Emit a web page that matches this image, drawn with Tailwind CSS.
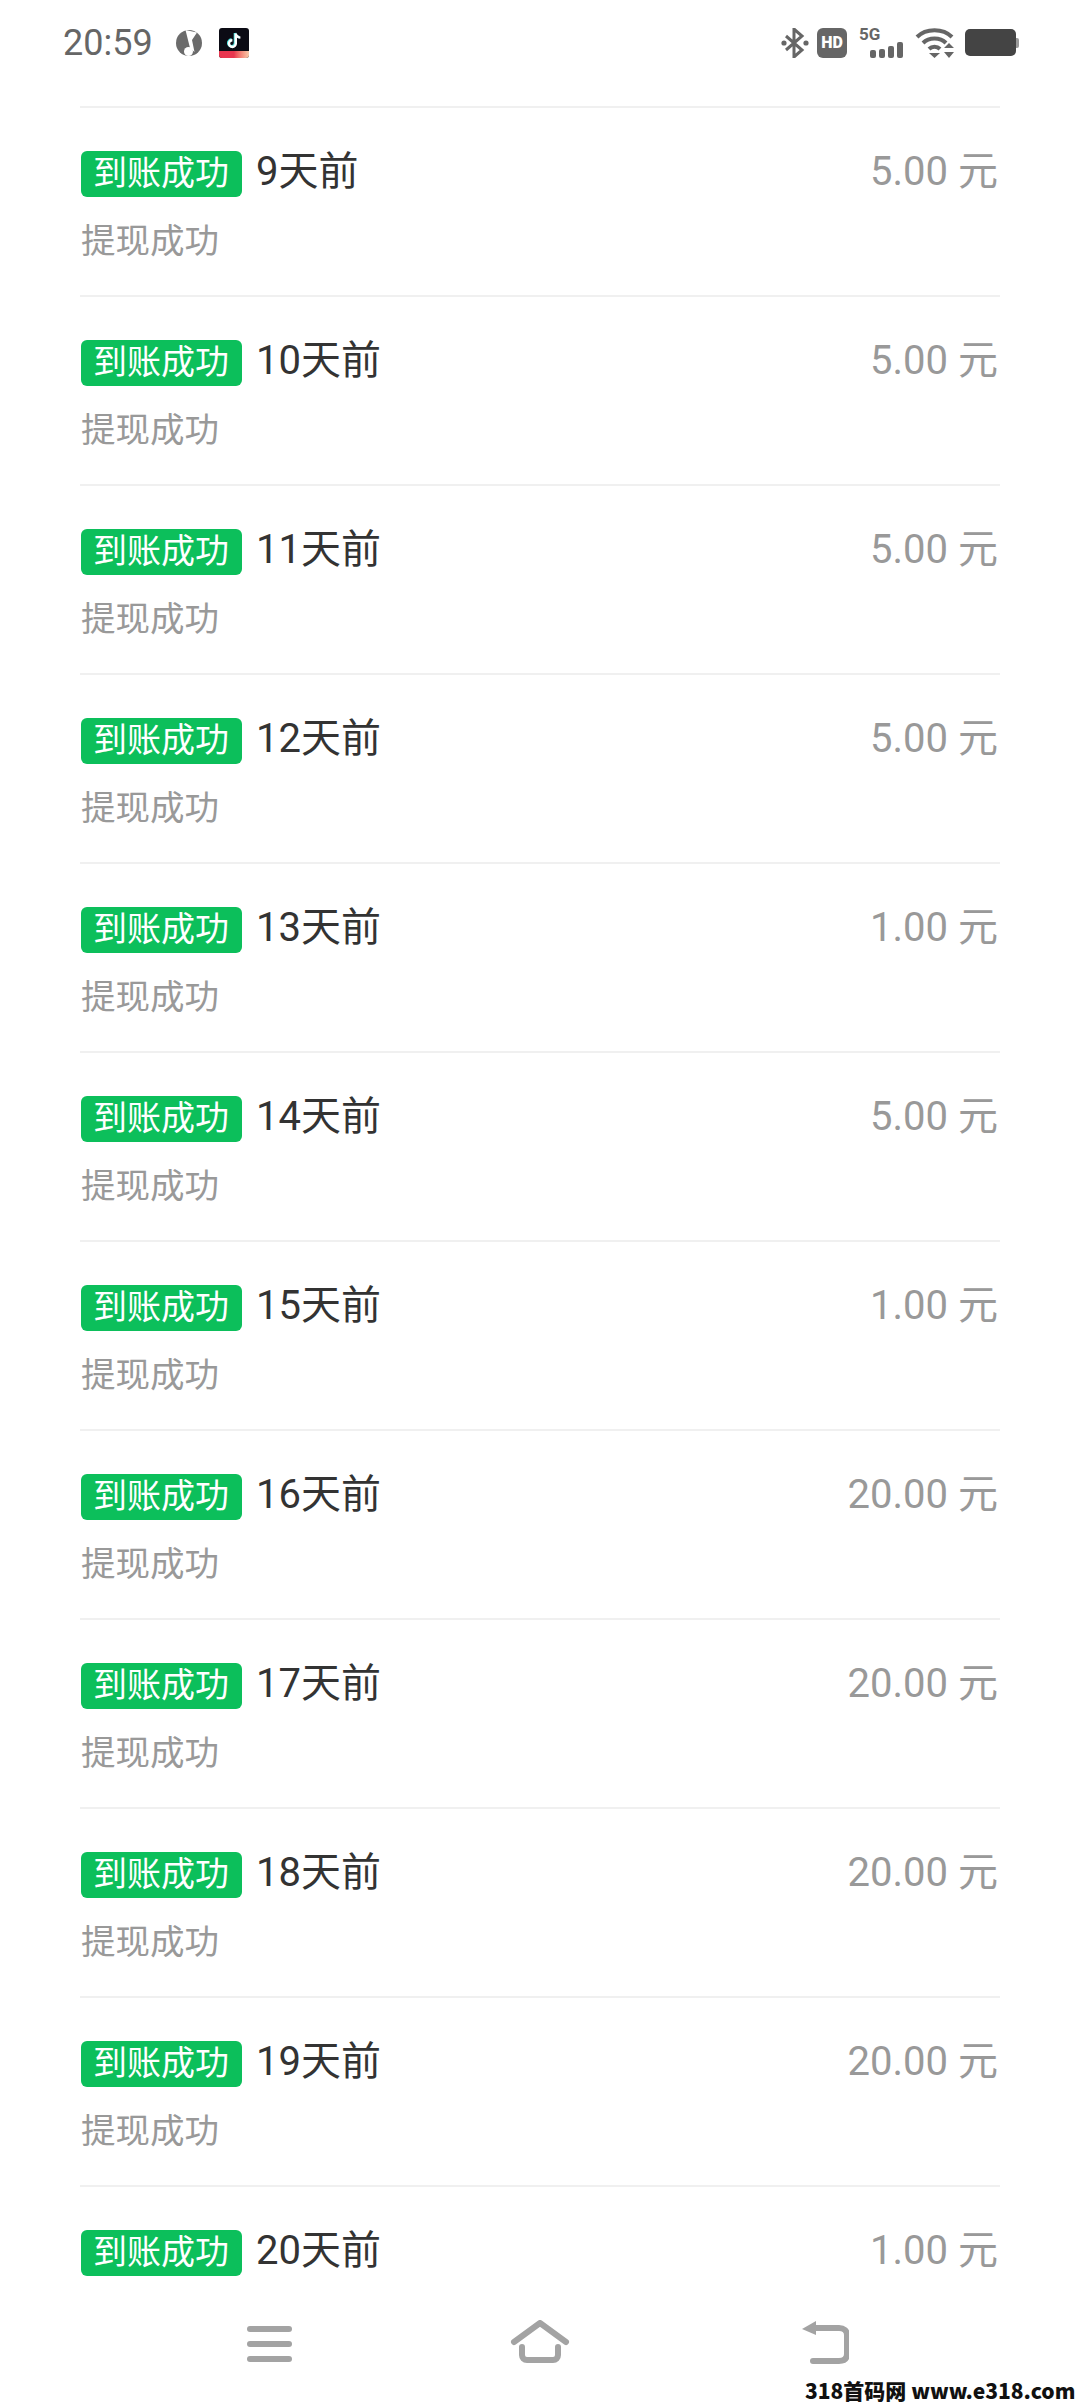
<!DOCTYPE html>
<html lang="zh-CN">
<head>
  <meta charset="UTF-8">
  <title>提现记录</title>
  <script src="https://cdn.jsdelivr.net/npm/@tailwindcss/browser@4"></script>
</head>
<body class="bg-white">
<div id="page" class="relative flex flex-col w-[1080px] h-[2408px] overflow-hidden bg-white font-['Roboto','Noto_Sans_CJK_SC',sans-serif]">
  <!-- Status bar -->
  <div class="flex items-center h-[84px] shrink-0 pl-[63px] pr-[61px] pt-[1px] text-[#666]">
    <span class="text-[36px] leading-none">20:59</span>
    <svg class="ml-[22px] w-[28px] h-[28px]" viewBox="0 0 28 28">
      <circle cx="14" cy="14" r="13" fill="#6b6b6b"/>
      <path d="M10.500 1L22 3.500 17 11 19.500 23 15 19z" fill="#fff"/>
      <circle cx="13.500" cy="22.500" r="4.500" fill="#fff"/>
    </svg>
    <div class="relative ml-[16px] w-[30px] h-[30px] rounded-[3px] bg-[#0b0b14] overflow-hidden">
      <svg class="absolute left-[6px] top-[3px] w-[18px] h-[18px]" viewBox="0 0 18 18" fill="none">
        <path d="M10 2v10a3.4 3.4 0 1 1-3.4-3.4M10 2c.4 2.6 2.2 4 4.6 4.2" stroke="#4fe3e0" stroke-width="2.6"/>
        <path d="M10.8 2.6v10a3.4 3.4 0 1 1-3.4-3.4M10.8 2.6c.4 2.4 2.2 3.8 4.6 4" stroke="#fff" stroke-width="2.4"/>
      </svg>
      <div class="absolute left-0 bottom-0 w-full h-[7px] bg-gradient-to-r from-[#e8364f] via-[#e8364f] to-[#f6c9a8]"></div>
    </div>
    <div class="ml-auto flex items-center">
      <svg class="w-[28px] h-[30px]" viewBox="0 0 28 30" fill="none">
        <path d="M5 8l16 14-8 7V1l8 7L5 22" stroke="#666" stroke-width="3"/>
        <circle cx="3" cy="15" r="2.6" fill="#666"/><circle cx="25" cy="15" r="2.6" fill="#666"/>
      </svg>
      <div class="ml-[8px] flex items-center justify-center w-[30px] h-[30px] rounded-[6px] bg-[#666] text-white text-[16px] font-black leading-none">HD</div>
      <div class="relative ml-[12px] w-[44px] h-[30px]">
        <span class="absolute left-0 top-[-2px] text-[17px] font-bold leading-none text-[#666]">5G</span>
        <div class="absolute right-0 bottom-0 flex items-end gap-[3px]">
          <div class="w-[6px] h-[8px] rounded-[2px] bg-[#666]"></div>
          <div class="w-[6px] h-[9px] rounded-[2px] bg-[#666]"></div>
          <div class="w-[6px] h-[12px] rounded-[2px] bg-[#666]"></div>
          <div class="w-[6px] h-[16px] rounded-[2px] bg-[#666]"></div>
        </div>
      </div>
      <svg class="ml-[12px] w-[40px] h-[30px]" viewBox="0 0 40 30" fill="none">
        <path d="M2 9C11 0 28 0 37 9M8 15c6-6 17-6 23 0M14 21c3-3 8-3 11 0" stroke="#666" stroke-width="4"/>
        <path d="M14 25h11l-5.500 5zM29 20l5-5 5 5zM29 24h10l-5 6z" fill="#666"/>
      </svg>
      <div class="ml-[10px] w-[51px] h-[27px] rounded-[5px] bg-[#444]"></div>
      <div class="w-[3px] h-[10px] rounded-r-[2px] bg-[#999]"></div>
    </div>
  </div>

  <!-- Records -->
  <div class="flex-1 px-[80px] pt-[22px] min-h-0">
    <div class="h-[189px] border-t-2 border-[#f0f0f0] pt-[43px]">
      <div class="flex items-center h-[46px]">
        <span class="flex items-center justify-center ml-[1px] w-[161px] h-[46px] pb-[2px] pr-[1px] rounded-[6px] bg-[#0cbf5b] text-white text-[34px] leading-none">到账成功</span>
        <span class="ml-[14px] pb-[4px] text-[40px] leading-none text-[#333]">9天前</span>
        <span class="ml-auto mr-[2px] pb-[4px] text-[40px] leading-none text-[#999]">5.00 元</span>
      </div>
      <div class="mt-[20px] ml-[1px] text-[34.500px] leading-[48px] text-[#999]">提现成功</div>
    </div>
    <div class="h-[189px] border-t-2 border-[#f0f0f0] pt-[43px]">
      <div class="flex items-center h-[46px]">
        <span class="flex items-center justify-center ml-[1px] w-[161px] h-[46px] pb-[2px] pr-[1px] rounded-[6px] bg-[#0cbf5b] text-white text-[34px] leading-none">到账成功</span>
        <span class="ml-[14px] pb-[4px] text-[40px] leading-none text-[#333]">10天前</span>
        <span class="ml-auto mr-[2px] pb-[4px] text-[40px] leading-none text-[#999]">5.00 元</span>
      </div>
      <div class="mt-[20px] ml-[1px] text-[34.500px] leading-[48px] text-[#999]">提现成功</div>
    </div>
    <div class="h-[189px] border-t-2 border-[#f0f0f0] pt-[43px]">
      <div class="flex items-center h-[46px]">
        <span class="flex items-center justify-center ml-[1px] w-[161px] h-[46px] pb-[2px] pr-[1px] rounded-[6px] bg-[#0cbf5b] text-white text-[34px] leading-none">到账成功</span>
        <span class="ml-[14px] pb-[4px] text-[40px] leading-none text-[#333]">11天前</span>
        <span class="ml-auto mr-[2px] pb-[4px] text-[40px] leading-none text-[#999]">5.00 元</span>
      </div>
      <div class="mt-[20px] ml-[1px] text-[34.500px] leading-[48px] text-[#999]">提现成功</div>
    </div>
    <div class="h-[189px] border-t-2 border-[#f0f0f0] pt-[43px]">
      <div class="flex items-center h-[46px]">
        <span class="flex items-center justify-center ml-[1px] w-[161px] h-[46px] pb-[2px] pr-[1px] rounded-[6px] bg-[#0cbf5b] text-white text-[34px] leading-none">到账成功</span>
        <span class="ml-[14px] pb-[4px] text-[40px] leading-none text-[#333]">12天前</span>
        <span class="ml-auto mr-[2px] pb-[4px] text-[40px] leading-none text-[#999]">5.00 元</span>
      </div>
      <div class="mt-[20px] ml-[1px] text-[34.500px] leading-[48px] text-[#999]">提现成功</div>
    </div>
    <div class="h-[189px] border-t-2 border-[#f0f0f0] pt-[43px]">
      <div class="flex items-center h-[46px]">
        <span class="flex items-center justify-center ml-[1px] w-[161px] h-[46px] pb-[2px] pr-[1px] rounded-[6px] bg-[#0cbf5b] text-white text-[34px] leading-none">到账成功</span>
        <span class="ml-[14px] pb-[4px] text-[40px] leading-none text-[#333]">13天前</span>
        <span class="ml-auto mr-[2px] pb-[4px] text-[40px] leading-none text-[#999]">1.00 元</span>
      </div>
      <div class="mt-[20px] ml-[1px] text-[34.500px] leading-[48px] text-[#999]">提现成功</div>
    </div>
    <div class="h-[189px] border-t-2 border-[#f0f0f0] pt-[43px]">
      <div class="flex items-center h-[46px]">
        <span class="flex items-center justify-center ml-[1px] w-[161px] h-[46px] pb-[2px] pr-[1px] rounded-[6px] bg-[#0cbf5b] text-white text-[34px] leading-none">到账成功</span>
        <span class="ml-[14px] pb-[4px] text-[40px] leading-none text-[#333]">14天前</span>
        <span class="ml-auto mr-[2px] pb-[4px] text-[40px] leading-none text-[#999]">5.00 元</span>
      </div>
      <div class="mt-[20px] ml-[1px] text-[34.500px] leading-[48px] text-[#999]">提现成功</div>
    </div>
    <div class="h-[189px] border-t-2 border-[#f0f0f0] pt-[43px]">
      <div class="flex items-center h-[46px]">
        <span class="flex items-center justify-center ml-[1px] w-[161px] h-[46px] pb-[2px] pr-[1px] rounded-[6px] bg-[#0cbf5b] text-white text-[34px] leading-none">到账成功</span>
        <span class="ml-[14px] pb-[4px] text-[40px] leading-none text-[#333]">15天前</span>
        <span class="ml-auto mr-[2px] pb-[4px] text-[40px] leading-none text-[#999]">1.00 元</span>
      </div>
      <div class="mt-[20px] ml-[1px] text-[34.500px] leading-[48px] text-[#999]">提现成功</div>
    </div>
    <div class="h-[189px] border-t-2 border-[#f0f0f0] pt-[43px]">
      <div class="flex items-center h-[46px]">
        <span class="flex items-center justify-center ml-[1px] w-[161px] h-[46px] pb-[2px] pr-[1px] rounded-[6px] bg-[#0cbf5b] text-white text-[34px] leading-none">到账成功</span>
        <span class="ml-[14px] pb-[4px] text-[40px] leading-none text-[#333]">16天前</span>
        <span class="ml-auto mr-[2px] pb-[4px] text-[40px] leading-none text-[#999]">20.00 元</span>
      </div>
      <div class="mt-[20px] ml-[1px] text-[34.500px] leading-[48px] text-[#999]">提现成功</div>
    </div>
    <div class="h-[189px] border-t-2 border-[#f0f0f0] pt-[43px]">
      <div class="flex items-center h-[46px]">
        <span class="flex items-center justify-center ml-[1px] w-[161px] h-[46px] pb-[2px] pr-[1px] rounded-[6px] bg-[#0cbf5b] text-white text-[34px] leading-none">到账成功</span>
        <span class="ml-[14px] pb-[4px] text-[40px] leading-none text-[#333]">17天前</span>
        <span class="ml-auto mr-[2px] pb-[4px] text-[40px] leading-none text-[#999]">20.00 元</span>
      </div>
      <div class="mt-[20px] ml-[1px] text-[34.500px] leading-[48px] text-[#999]">提现成功</div>
    </div>
    <div class="h-[189px] border-t-2 border-[#f0f0f0] pt-[43px]">
      <div class="flex items-center h-[46px]">
        <span class="flex items-center justify-center ml-[1px] w-[161px] h-[46px] pb-[2px] pr-[1px] rounded-[6px] bg-[#0cbf5b] text-white text-[34px] leading-none">到账成功</span>
        <span class="ml-[14px] pb-[4px] text-[40px] leading-none text-[#333]">18天前</span>
        <span class="ml-auto mr-[2px] pb-[4px] text-[40px] leading-none text-[#999]">20.00 元</span>
      </div>
      <div class="mt-[20px] ml-[1px] text-[34.500px] leading-[48px] text-[#999]">提现成功</div>
    </div>
    <div class="h-[189px] border-t-2 border-[#f0f0f0] pt-[43px]">
      <div class="flex items-center h-[46px]">
        <span class="flex items-center justify-center ml-[1px] w-[161px] h-[46px] pb-[2px] pr-[1px] rounded-[6px] bg-[#0cbf5b] text-white text-[34px] leading-none">到账成功</span>
        <span class="ml-[14px] pb-[4px] text-[40px] leading-none text-[#333]">19天前</span>
        <span class="ml-auto mr-[2px] pb-[4px] text-[40px] leading-none text-[#999]">20.00 元</span>
      </div>
      <div class="mt-[20px] ml-[1px] text-[34.500px] leading-[48px] text-[#999]">提现成功</div>
    </div>
    <div class="h-[120px] border-t-2 border-[#f0f0f0] pt-[43px]">
      <div class="flex items-center h-[46px]">
        <span class="flex items-center justify-center ml-[1px] w-[161px] h-[46px] pb-[2px] pr-[1px] rounded-[6px] bg-[#0cbf5b] text-white text-[34px] leading-none">到账成功</span>
        <span class="ml-[14px] pb-[4px] text-[40px] leading-none text-[#333]">20天前</span>
        <span class="ml-auto mr-[2px] pb-[4px] text-[40px] leading-none text-[#999]">1.00 元</span>
      </div>
    </div>
  </div>

  <!-- Nav bar -->
  <div class="h-[102px] shrink-0 bg-white flex items-start justify-between pl-[247px] pr-[231px] pt-[14px]">
    <div class="flex flex-col gap-[9px] w-[45px] pt-[6px]">
      <div class="h-[6px] rounded-full bg-[#a3a3a3]"></div>
      <div class="h-[6px] rounded-full bg-[#a3a3a3]"></div>
      <div class="h-[6px] rounded-full bg-[#a3a3a3]"></div>
    </div>
    <svg class="mr-[13px] w-[60px] h-[44px]" viewBox="0 0 60 44" fill="none">
      <path d="M4 22L30 3l26 19" stroke="#a3a3a3" stroke-width="6" stroke-linecap="round" stroke-linejoin="round"/>
      <path d="M12 27v8c0 3 2 5 5 5h26c3 0 5-2 5-5v-8" stroke="#a3a3a3" stroke-width="6" stroke-linecap="round"/>
    </svg>
    <svg class="w-[48px] h-[44px]" viewBox="0 0 48 44" fill="none">
      <path d="M14 8h24c5 0 8 3 8 7v19c0 5-3 7-8 7H12" stroke="#a3a3a3" stroke-width="6" stroke-linecap="round"/>
      <path d="M15 1L1 9l14 6z" fill="#a3a3a3"/>
    </svg>
  </div>

  <!-- Watermark -->
  <div class="absolute left-[805px] top-[2376px] text-[21px] leading-[28px] font-black whitespace-nowrap text-[#111] font-['Noto_Sans_CJK_SC',sans-serif]">318首码网 www.e318.com</div>
</div>
</body>
</html>
